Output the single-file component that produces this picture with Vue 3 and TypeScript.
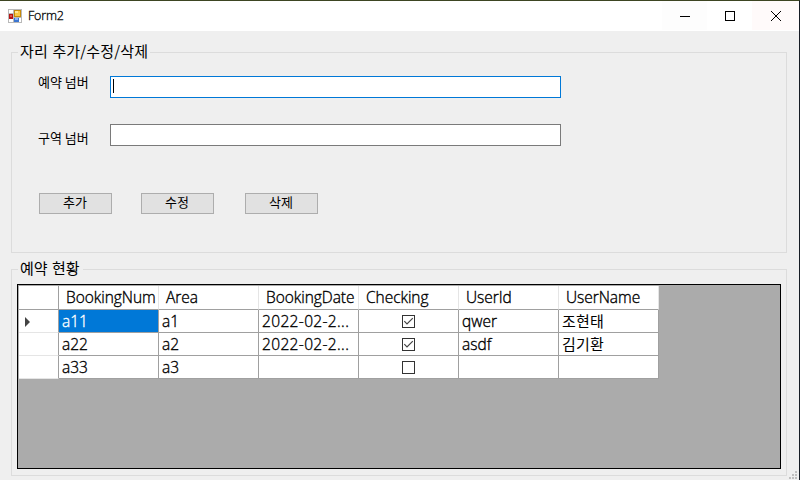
<script setup lang="ts">
import { ref } from 'vue'

interface Booking {
  num: string
  area: string
  date: string
  checked: boolean
  userId: string
  userName: string
}

const columns: string[] = ['BookingNum', 'Area', 'BookingDate', 'Checking', 'UserId', 'UserName']
const rows: Booking[] = [
  { num: 'a11', area: 'a1', date: '2022-02-2...', checked: true, userId: 'qwer', userName: '조현태' },
  { num: 'a22', area: 'a2', date: '2022-02-2...', checked: true, userId: 'asdf', userName: '김기환' },
  { num: 'a33', area: 'a3', date: '', checked: false, userId: '', userName: '' },
]
const selected = ref(0)
</script>

<template>
  <div class="window">
    <header class="titlebar">
      <svg class="app-icon" width="14" height="14" viewBox="0 0 14 14" shape-rendering="crispEdges">
        <rect width="14" height="14" fill="#b9b9b9" />
        <rect x="1" y="1" width="4" height="3" fill="#fff" />
        <rect x="1" y="10" width="4" height="3" fill="#fff" />
        <rect x="11" y="9" width="2" height="4" fill="#fff" />
        <rect x="1" y="5" width="4" height="5" fill="#b51414" />
        <rect x="2" y="6" width="2" height="2" fill="#e0574d" />
        <rect x="6" y="1" width="7" height="7" fill="#c58b0c" />
        <rect x="7" y="2" width="5" height="5" fill="#f9ca45" />
        <rect x="7" y="2" width="3" height="2" fill="#ffe694" />
        <rect x="6" y="9" width="5" height="4" fill="#3c76d2" />
        <rect x="7" y="9" width="3" height="2" fill="#8ab6f5" />
      </svg>
      <span class="title">Form2</span>
      <div class="controls">
        <button class="control minimize" aria-label="Minimize">
          <svg width="10" height="10" viewBox="0 0 10 10"><rect y="5" width="10" height="1" /></svg>
        </button>
        <button class="control maximize" aria-label="Maximize">
          <svg width="10" height="10" viewBox="0 0 10 10"><rect x=".5" y=".5" width="9" height="9" fill="none" stroke="#000" /></svg>
        </button>
        <button class="control close" aria-label="Close">
          <svg width="10" height="10" viewBox="0 0 10 10"><path d="M0 0 10 10M10 0 0 10" stroke="#000" stroke-width="1" /></svg>
        </button>
      </div>
    </header>

    <main class="client">
      <section class="group edit">
        <h2 class="legend"><span class="legend-edit">자리 추가/수정/삭제</span></h2>
        <div class="field">
          <label class="label">예약 넘버</label>
          <div class="textbox focused"><i class="caret"></i></div>
        </div>
        <div class="field second">
          <label class="label lower">구역 넘버</label>
          <div class="textbox"></div>
        </div>
        <div class="actions">
          <button class="btn">추가</button>
          <button class="btn">수정</button>
          <button class="btn last">삭제</button>
        </div>
      </section>

      <section class="group status">
        <h2 class="legend"><span class="legend-status">예약 현황</span></h2>
        <div class="grid-view">
          <div class="row head">
            <div class="row-header"></div>
            <div v-for="c in columns" :key="c" class="cell">{{ c }}</div>
          </div>
          <div v-for="(r, i) in rows" :key="r.num" class="row">
            <div class="row-header">
              <svg v-if="i === selected" width="5" height="10" viewBox="0 0 5 10"><path d="M0 0 5 5 0 10Z" fill="#444" /></svg>
            </div>
            <div class="cell" :class="{ selected: i === selected }" @click="selected = i">{{ r.num }}</div>
            <div class="cell">{{ r.area }}</div>
            <div class="cell date">{{ r.date }}</div>
            <div class="cell check">
              <svg width="13" height="13" viewBox="0 0 13 13">
                <rect x=".5" y=".5" width="12" height="12" fill="#fff" stroke="#333" />
                <path v-if="r.checked" d="M2.3 6.2 5 9 10.8 3.2" fill="none" stroke="#444" stroke-width="1.2" />
              </svg>
            </div>
            <div class="cell">{{ r.userId }}</div>
            <div class="cell name">{{ r.userName }}</div>
          </div>
        </div>
      </section>
      <svg class="grip" width="8" height="8" viewBox="0 0 8 8" fill="#bfbfbf" shape-rendering="crispEdges">
        <path d="M6 0h2v2H6zM3 3h2v2H3zM6 3h2v2H6zM0 6h2v2H0zM3 6h2v2H3zM6 6h2v2H6z" />
      </svg>
    </main>
  </div>
</template>

<style>
body {
  margin: 0;
  overflow: hidden;
}
</style>

<style scoped>
* {
  box-sizing: border-box;
}
.window {
  position: relative;
  width: 800px;
  height: 480px;
  border-top: 1px solid #3d4522;
  border-right: 1px solid #161c25;
  background: #efefef;
  color: #000;
  font-family: "Open Sans", "Noto Sans CJK KR", sans-serif;
  overflow: hidden;
}
.titlebar {
  display: flex;
  align-items: center;
  height: 30px;
  padding-left: 8px;
  background: #fff;
}
.title {
  margin-left: 6px;
  font: 300 12.5px/16px "Open Sans", sans-serif;
  letter-spacing: -0.2px;
  -webkit-text-stroke: 0.3px #000;
}
.controls {
  display: flex;
  margin-left: auto;
  height: 30px;
}
.control {
  display: flex;
  align-items: center;
  justify-content: center;
  width: 45px;
  height: 29px;
  padding: 0;
  border: 0;
  background: #fff;
}
.control svg {
  overflow: visible;
}
.minimize {
  background: #fdfdfd;
}
.close {
  width: 47px;
  background: #fffafa;
}
.client {
  padding: 21px 12px 0 11px;
}
.group {
  width: 776px;
  border: 1px solid #dcdcdc;
}
.edit {
  height: 201px;
}
.status {
  height: 207px;
  margin-top: 16px;
}
.legend {
  display: flex;
  width: max-content;
  height: 20px;
  margin: -12px 0 0 6px;
  padding: 0 2px;
  background: #efefef;
  font: 400 15px/20px "Noto Sans CJK KR", sans-serif;
  word-spacing: 1px;
  white-space: nowrap;
}
.legend-edit {
  width: 128px;
  letter-spacing: 0.15px;
}
.legend-status {
  width: 61px;
}
.field {
  display: flex;
  margin: 15px 0 0 26px;
}
.second {
  margin-top: 26px;
}
.label {
  width: 72px;
  height: 20px;
  margin-top: -4px;
  font: 13px/20px "Noto Sans CJK KR", sans-serif;
}
.lower {
  height: 17px;
  margin-top: 4px;
}
.textbox {
  width: 451px;
  height: 22px;
  border: 1px solid #7a7a7a;
  background: #fff;
}
.focused {
  border-color: #0078d7;
}
.caret {
  display: block;
  width: 1px;
  height: 14px;
  margin: 2px 0 0 2px;
  background: #000;
}
.actions {
  display: flex;
  gap: 29px;
  margin: 47px 0 0 27px;
}
.btn {
  width: 73px;
  height: 21px;
  padding: 0 1px 3px 0;
  border: 1px solid #adadad;
  background: #e1e1e1;
  color: #000;
  font: 13px/16px "Noto Sans CJK KR", sans-serif;
}
.last {
  margin-left: 2px;
}
.grid-view {
  width: 764px;
  height: 185px;
  margin: 6px 0 0 5px;
  padding: 1px 0 0 1px;
  border: 1px solid #000;
  background: #ababab;
}
.row {
  display: grid;
  grid-template-columns: 40px repeat(6, 100px);
  width: 640px;
  height: 23px;
  background: #fff;
}
.head {
  height: 24px;
}
.row-header {
  display: flex;
  align-items: center;
  padding: 2px 0 0 6px;
  border-right: 1px solid #a0a0a0;
  border-bottom: 1px solid #e5e5e5;
}
.cell {
  padding-left: 3px;
  border-right: 1px solid #a0a0a0;
  border-bottom: 1px solid #a0a0a0;
  font-size: 15.5px;
  font-weight: 300;
  line-height: 23px;
  -webkit-text-stroke: 0.35px currentColor;
  white-space: nowrap;
  overflow: hidden;
}
.date {
  letter-spacing: 0.35px;
}
.name {
  font-family: "Noto Sans CJK KR", sans-serif;
  font-size: 15px;
  font-weight: 400;
  line-height: 22px;
  letter-spacing: 0.2px;
  -webkit-text-stroke: 0;
}
.head > * {
  border-bottom-color: #a0a0a0;
}
.head .cell {
  padding-left: 7px;
  border-right-color: #e5e5e5;
  letter-spacing: -0.05px;
}
.selected {
  background: #0078d7;
  color: #fff;
}
.check {
  display: flex;
  align-items: center;
  justify-content: center;
  padding: 0;
}
.grip {
  position: absolute;
  right: 2px;
  bottom: 1px;
}
</style>
